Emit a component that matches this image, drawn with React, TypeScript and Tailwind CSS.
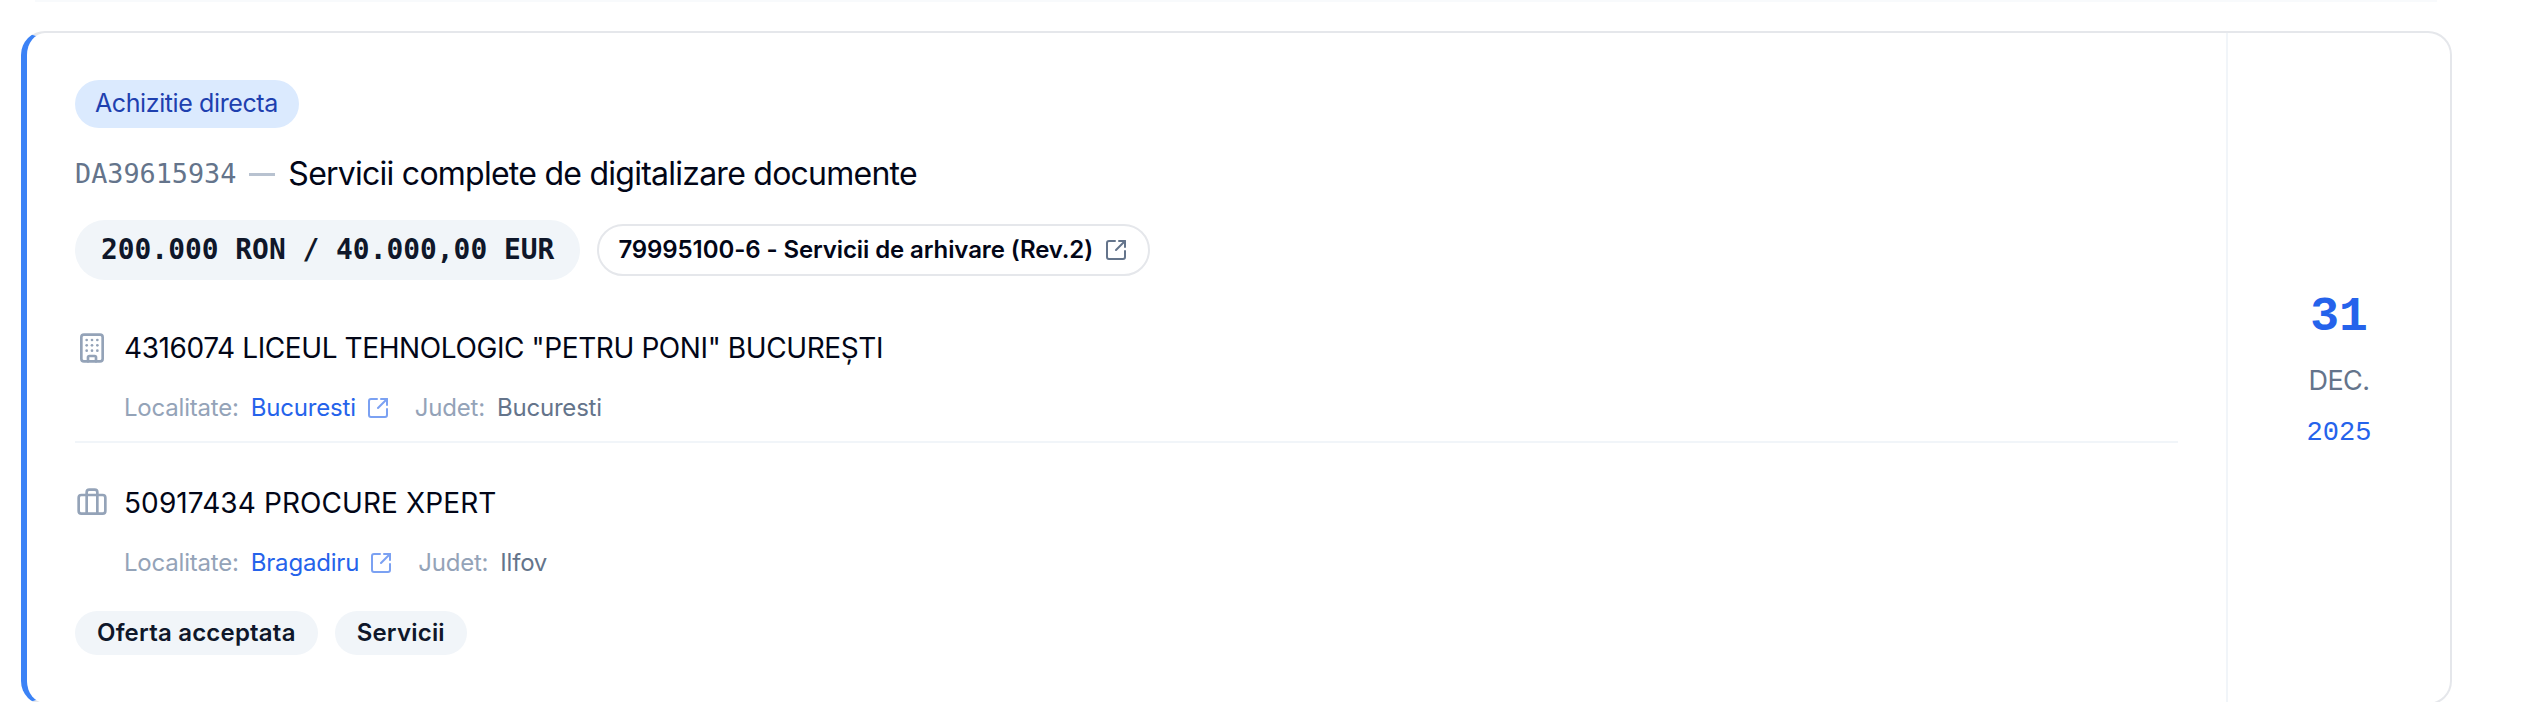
import { Briefcase, Building, SquareArrowOutUpRight } from "lucide-react";

const sans = "font-['Inter',sans-serif]";
const mono = "font-['Liberation_Mono',monospace]";
const codeFont = "font-['DejaVu_Sans_Mono',monospace]";

type PartyProps = {
  icon: React.ReactNode;
  name: string;
  nameClass: string;
  city: string;
  county: string;
};

function Party({ icon, name, nameClass, city, county }: PartyProps) {
  return (
    <div>
      <div className="flex h-[40px] items-center gap-[16px] pl-px">
        {icon}
        <span className={`text-[28px] text-[#020617] ${nameClass}`}>{name}</span>
      </div>
      <div className="mt-[22px] flex h-[36px] items-center pl-[49px] text-[24px] tracking-[-0.2px]">
        <span className="text-[#94a3b8]">Localitate:</span>
        <a className="ml-[12px] text-[#2563eb]">{city}</a>
        <SquareArrowOutUpRight size={24} strokeWidth={2} className="ml-[10px] text-[#2563eb] opacity-60" />
        <span className="ml-[25px] text-[#94a3b8]">Judet:</span>
        <span className="ml-[12px] text-[#64748b]">{county}</span>
      </div>
    </div>
  );
}

export default function App() {
  return (
    <div className={`h-[702px] w-[2524px] overflow-hidden bg-white ${sans}`}>
      <div className="mx-[35px] h-[2px] w-[2402px] bg-[#f8fafc]" />
      <div className="ml-[21px] mt-[29px] flex h-[674px] w-[2431px] rounded-[24px] border-2 border-l-[6px] border-[#e5e7eb] border-l-[#3b82f6] bg-white">
        <div className="flex-1 pl-[48px] pr-[48px] pt-[47px]">
          <span className="inline-flex h-[48px] items-center rounded-full bg-[#dbeafe] pl-[20px] pr-[21px] text-[25px] tracking-[-0.4px] text-[#1e40af]">
            Achizitie directa
          </span>
          <div className="mt-[26px] flex h-[40px] items-center">
            <span className={`${codeFont} text-[26.8px] text-[#64748b]`}>DA39615934</span>
            <span className="ml-[13px] h-[3px] w-[26px] bg-[#b8c2d0]" />
            <span className="ml-[13px] text-[32px] tracking-[-0.75px] text-[#020617]">
              Servicii complete de digitalizare documente
            </span>
          </div>
          <div className="mt-[26px] flex items-center gap-[17px]">
            <span className={`${codeFont} flex h-[60px] items-center rounded-full bg-[#f1f5f9] px-[26px] text-[27.9px] font-bold text-[#0f172a]`}>
              200.000 RON / 40.000,00 EUR
            </span>
            <span className="flex h-[52px] items-center gap-[11px] rounded-full border-2 border-[#e5e7eb] pl-[19px] pr-[20px] text-[24px] font-semibold tracking-[-0.1px] text-[#020617]">
              79995100-6 - Servicii de arhivare (Rev.2)
              <SquareArrowOutUpRight size={24} strokeWidth={2} className="text-[#64748b]" />
            </span>
          </div>
          <div className="mt-[48px]">
            <Party
              icon={<Building size={32} strokeWidth={2} className="text-[#94a3b8]" />}
              name={'4316074 LICEUL TEHNOLOGIC "PETRU PONI" BUCUREȘTI'}
              nameClass="tracking-[-0.4px]"
              city="Bucuresti"
              county="Bucuresti"
            />
          </div>
          <div className="mt-[15px] border-t-2 border-[#f1f5f9] pt-[40px]">
            <Party
              icon={<Briefcase size={32} strokeWidth={2} className="text-[#94a3b8]" />}
              name="50917434 PROCURE XPERT"
              nameClass="tracking-[0.1px]"
              city="Bragadiru"
              county="Ilfov"
            />
          </div>
          <div className="mt-[30px] flex gap-[17px]">
            <span className="flex h-[44px] items-center rounded-full bg-[#f1f5f9] px-[22px] text-[24px] font-semibold tracking-[0.2px] text-[#0f172a]">
              Oferta acceptata
            </span>
            <span className="flex h-[44px] items-center rounded-full bg-[#f1f5f9] px-[22px] text-[24px] font-semibold tracking-[0.2px] text-[#0f172a]">
              Servicii
            </span>
          </div>
        </div>
        <div className="flex w-[224px] shrink-0 flex-col items-center justify-center border-l-2 border-[#f1f5f9] pt-[4px]">
          <span className={`${mono} text-[48px] font-bold leading-[56px] text-[#2563eb]`}>31</span>
          <span className="mt-[18.5px] text-[27px] leading-[36px] tracking-[-0.5px] text-[#64748b]">DEC.</span>
          <span className={`${mono} mt-[16px] text-[27px] leading-[36px] text-[#2563eb]`}>2025</span>
        </div>
      </div>
    </div>
  );
}
